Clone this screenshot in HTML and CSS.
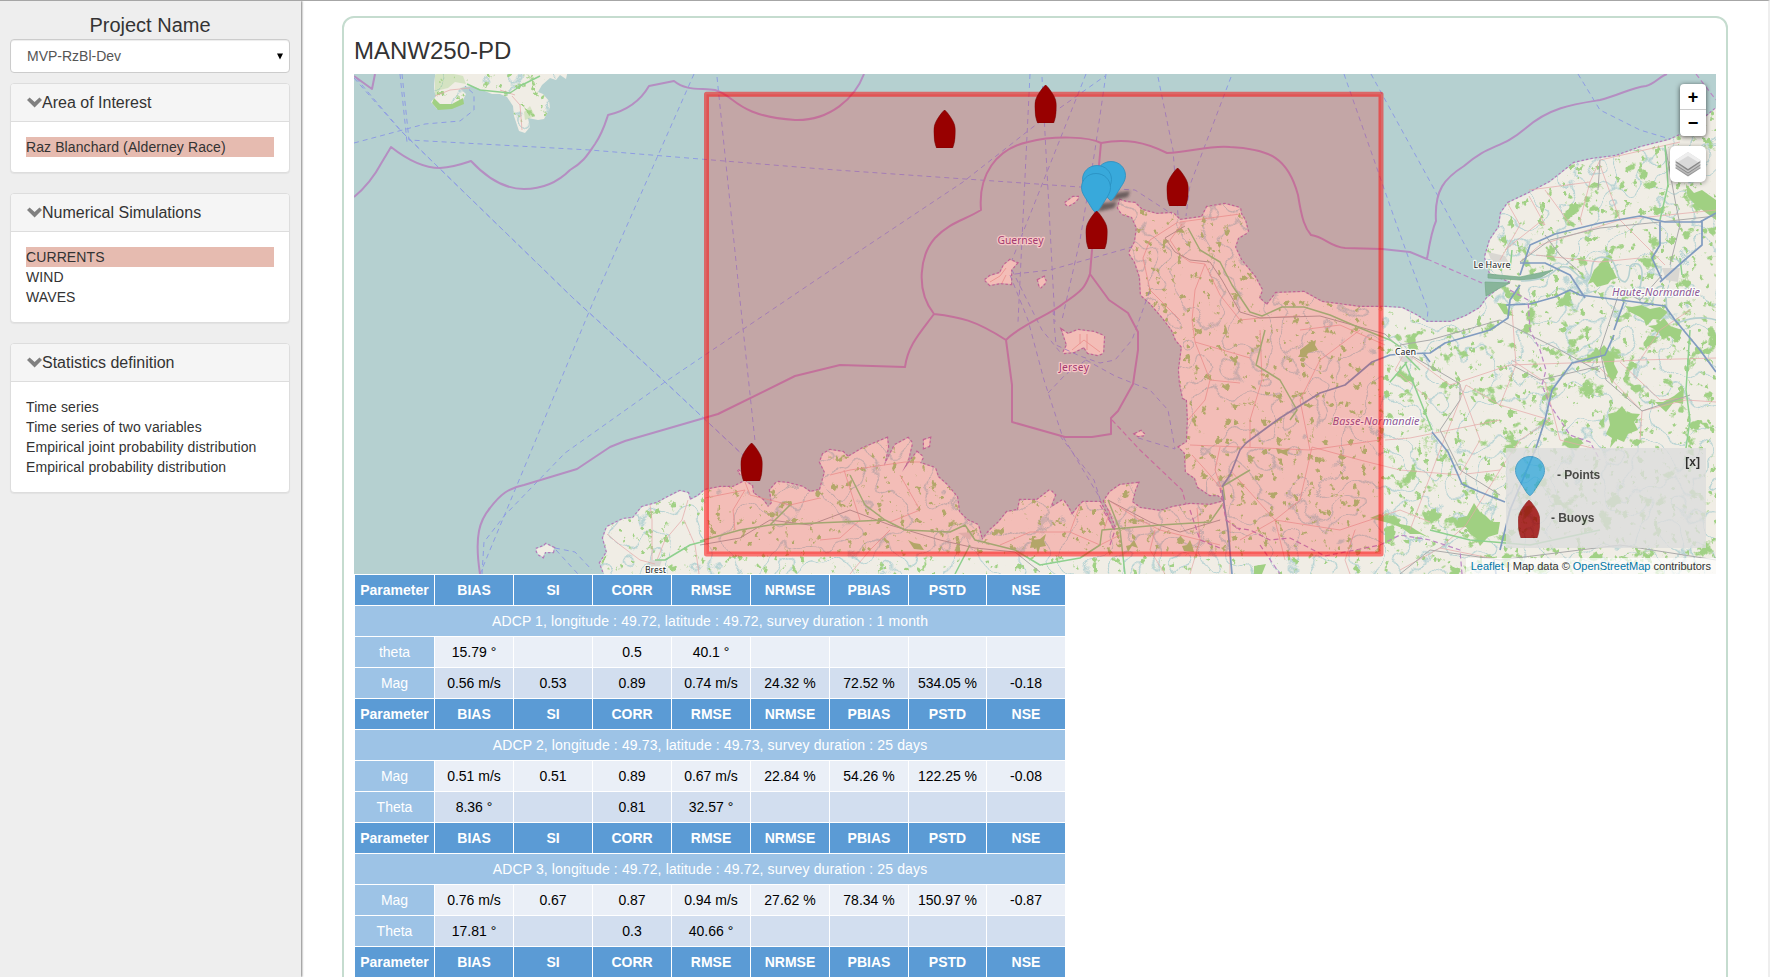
FILE: index.html
```html
<!DOCTYPE html>
<html lang="en">
<head>
<meta charset="utf-8">
<title>MANW250-PD</title>
<link rel="stylesheet" href="styles.css">
</head>
<body>
<svg class="sprites" width="0" height="0" aria-hidden="true">
  <defs>
    <symbol id="chevron" viewBox="0 0 15 11"><path d="M2.6.6 7.6 5 12.5.6 15 3.1 7.6 10.6 0 3.1z"/></symbol>
    <symbol id="buoy" viewBox="0 0 22 38"><path d="M11 0C12.500 .8 18 8 20 12.500C22 17 22 20 21.700 24C21.500 30 20.500 34 19 38H3C1.500 34 .5 30 .3 24C0 20 0 17 2 12.500C4 8 9.500 .8 11 0Z"/></symbol>
    <symbol id="point" viewBox="0 0 30 40"><path d="M15 .5C23.500 .5 29.500 7 29.500 14.500C29.500 20 26 24 23 29C20 33.500 17 39 15 39.500C12.500 39 10 33.500 7 29C4 24 .5 20 .5 14.500C.5 7 6.500 .5 15 .5Z"/></symbol>
  </defs>
</svg>
<div class="page">
  <aside class="sidebar">
    <h1 class="project-title">Project Name</h1>
    <div class="select"><span>MVP-RzBl-Dev</span><svg class="select-arrow" viewBox="0 0 6 7"><path d="M0 .5H6L3 6.500Z"/></svg></div>
    <section class="box">
      <h2 class="box-head"><svg class="chev"><use href="#chevron"/></svg>Area of Interest</h2>
      <ul class="box-body"><li class="active">Raz Blanchard (Alderney Race)</li></ul>
    </section>
    <section class="box">
      <h2 class="box-head"><svg class="chev"><use href="#chevron"/></svg>Numerical Simulations</h2>
      <ul class="box-body"><li class="active">CURRENTS</li><li>WIND</li><li>WAVES</li></ul>
    </section>
    <section class="box">
      <h2 class="box-head"><svg class="chev"><use href="#chevron"/></svg>Statistics definition</h2>
      <ul class="box-body"><li>Time series</li><li>Time series of two variables</li><li>Empirical joint probability distribution</li><li>Empirical probability distribution</li></ul>
    </section>
  </aside>
  <main class="content">
    <div class="card">
      <h2 class="card-title">MANW250-PD</h2>
      <div class="map">
        <svg class="map-canvas" viewBox="354 74 1362 500">
          <defs>
            <path id="france" d="M605 576 600 563 607 552 603 538 607 527 623 519 633 518 642 507 657 503 668 497 680 491 688 493 690 500 698 496 705 490 720 487 733 487 745 481 752 486 753 493 763 500 768 507 772 503 770 490 777 482 788 483 803 487 810 492 820 490 825 472 820 462 823 454 830 450 843 452 848 457 863 448 875 443 887 438 888 447 884 466 895 445 908 438 912 443 908 460 902 472 917 452 923 457 920 463 935 468 938 477 947 485 957 497 959 512 967 520 978 525 982 540 990 530 998 523 1007 512 1018 510 1020 500 1037 500 1050 490 1055 495 1050 508 1063 500 1068 507 1072 515 1078 507 1083 502 1100 502 1107 515 1113 530 1116 527 1110 512 1104 501 1110 492 1120 485 1138 483 1135 490 1132 502 1140 508 1160 511 1173 507 1190 504 1210 505 1225 501 1218 495 1210 495 1198 487 1195 478 1186 472 1185 453 1179 447 1187 442 1188 420 1187 400 1183 398 1180 383 1179 370 1182 347 1176 340 1172 330 1163 318 1150 303 1141 295 1140 277 1135 262 1129 253 1135 242 1137 228 1132 217 1122 214 1118 208 1120 200 1126 202 1135 203 1142 210 1157 214 1173 213 1180 220 1202 217 1207 207 1225 204 1240 208 1241 214 1245 220 1248 232 1238 238 1235 247 1241 260 1255 277 1262 290 1259 298 1267 305 1276 293 1304 292 1322 302 1360 307 1385 307 1402 308 1416 315 1427 322 1451 322 1466 316 1480 308 1487 298 1501 287 1511 282 1490 273 1488 267 1485 257 1490 240 1499 227 1501 213 1508 203 1529 193 1550 182 1574 163 1592 159 1616 156 1641 147 1669 140 1687 132 1708 115 1720 105 1720 580 605 580Z"/>
            <path id="cornwall" d="M436 70C434 82 433 90 436 96L431 102 437 109 452 108 463 100 466 94 460 88 472 86 482 90 492 94 500 94 507 97 513 106 514 116 519 131 525 133 530 127 528 118 538 120 544 119 550 108 549 101 543 94 538 92 542 85 550 78 556 80 560 75 566 79 568 70Z"/>
            <path id="islands" d="M985 280 990 276 1000 273 1004 265 1010 260 1017 263 1011 270 1011 284 1000 283 990 285ZM1038 280 1044 277 1046 282 1040 288ZM1065 203 1073 197 1079 197 1075 202 1068 206ZM1062 330 1068 334 1078 330 1094 332 1104 336 1103 353 1098 355 1088 353 1084 347 1074 352 1063 353 1067 345ZM536 549 544 546 546 544 554 548 553 552 545 552 543 557 538 554ZM924 440 930 438 929 446 924 448ZM1135 434 1141 431 1145 435 1138 436ZM738 470 743 474 741 475Z"/>
            <clipPath id="landclip"><use href="#france"/><use href="#cornwall"/></clipPath>
            <clipPath id="eastclip"><path d="M1385 320 1450 330 1540 220 1640 150 1716 120V574H1385Z"/></clipPath>
            <filter id="woods" x="0" y="0" width="1" height="1" color-interpolation-filters="sRGB">
              <feTurbulence type="fractalNoise" baseFrequency=".05 .055" numOctaves="5" seed="7"/>
              <feColorMatrix values="0 0 0 0 .63  0 0 0 0 .82  0 0 0 0 .52  14 0 0 0 -8.900"/>
            </filter>
            <filter id="groves" x="0" y="0" width="1" height="1" color-interpolation-filters="sRGB">
              <feTurbulence type="fractalNoise" baseFrequency=".13 .11" numOctaves="4" seed="23"/>
              <feColorMatrix values="0 0 0 0 .63  0 0 0 0 .82  0 0 0 0 .52  12 0 0 0 -7.900"/>
            </filter>
            <filter id="streams" x="0" y="0" width="1" height="1" color-interpolation-filters="sRGB">
              <feTurbulence type="fractalNoise" baseFrequency=".018" numOctaves="3" seed="4"/>
              <feColorMatrix values="0 0 0 0 .66  0 0 0 0 .80  0 0 0 0 .81  1 0 0 0 0"/>
              <feComponentTransfer><feFuncA type="table" tableValues="0 0 0 0 0 0 0 0 0 0 0 0 0 0 0 0 0 0 0 0 0 0 0 0 0 0 0 0 .8 0 0 0 0 0 0 0 0 0 0 0 .8 0 0 0 0 0 0 0 0 0 0 0 0 0 0 0 0 0 0 0 0 0 0 0 0 0 0 0 0 0"/></feComponentTransfer>
            </filter>
            <filter id="soft" x="-30%" y="-50%" width="160%" height="200%"><feGaussianBlur stdDeviation="1.5"/></filter>
          </defs>
          <rect x="354" y="74" width="1362" height="500" fill="#b5d0d0"/>
          <g class="coast"><use href="#france"/><use href="#islands"/></g>
          <g fill="#f0ede5"><use href="#france"/><use href="#cornwall"/><use href="#islands"/></g>
          <g clip-path="url(#landclip)">
            <rect x="354" y="74" width="1362" height="500" filter="url(#streams)"/>
            <rect x="354" y="74" width="1362" height="500" filter="url(#groves)"/>
            <g clip-path="url(#eastclip)"><rect x="1300" y="74" width="416" height="500" filter="url(#woods)"/></g>
          </g>
          <g class="forest">
            <path d="M1686 184 1694 193 1702 190 1716 200V220L1705 212 1697 206 1688 197ZM1594 270 1602 262 1606 266 1612 268 1617 278 1611 280 1608 284 1597 287 1593 282 1588 284ZM1625 306 1632 307 1642 305 1650 309 1660 307 1668 312 1660 320 1653 319 1646 326 1644 320 1640 317 1630 312ZM1648 326 1656 325 1664 318 1670 326 1682 330 1678 342 1670 336 1662 338 1658 331ZM1604 345 1610 352 1615 356 1614 364 1618 372 1612 384 1606 370 1603 360 1597 352ZM1608 414 1616 412 1622 406 1627 413 1640 414 1634 422 1638 430 1628 434 1624 442 1617 439 1610 448 1612 438 1606 434 1610 425ZM1655 402 1663 402 1674 396 1684 388 1683 404 1674 402 1666 412ZM1458 518 1467 516 1474 503 1480 512 1486 516 1492 522 1500 522 1498 534 1488 537 1480 546 1476 538 1470 534 1466 527 1456 528ZM1380 514 1388 518 1394 515 1400 524 1410 526 1416 530 1430 538 1420 534 1410 534 1402 528 1392 524 1370 518ZM1300 350 1308 344 1316 340 1315 345 1318 350 1308 353 1306 357 1298 357 1300 354ZM1276 448 1283 450 1290 448 1287 452 1288 456 1281 453 1278 454ZM1032 540 1040 539 1046 534 1044 541 1046 546 1040 547 1038 554 1036 547 1030 548ZM1182 546 1187 545 1190 540 1192 545 1194 552 1184 551ZM1126 546 1130 545 1134 540 1138 548 1132 546 1128 552ZM908 540 914 543 920 544 924 550 914 549ZM1254 566 1266 564 1262 574 1254 574ZM1497 303 1506 304 1508 310 1514 316 1504 314ZM434 98 440 104 452 104 463 98 464 104 452 109 438 110 432 103Z"/>
            <path d="M435 76C436 70 455 74 463 76L466 84 455 82 448 88 440 90 435 96ZM524 112 530 106 535 116 525 120Z" fill-opacity=".35"/>
          </g>
          <g class="port"><path d="M1488 274 1520 277 1553 270 1538 279 1520 280 1488 278ZM1485 282 1510 283 1498 289 1486 296Z"/></g>
          <g class="town"><path d="M1488 252 1505 256 1512 268 1494 268ZM1662 268 1680 268 1678 282 1666 280ZM1398 356 1414 354 1412 362 1402 362ZM650 560 662 560 660 566 650 566ZM958 533 974 532 970 540ZM1178 222 1186 222 1182 228Z"/></g>
          <path class="river" d="M1521 281C1545 280 1550 275 1558 268C1572 262 1576 278 1586 281C1596 278 1586 258 1602 257C1622 258 1612 280 1625 282C1634 276 1624 262 1638 264C1650 272 1630 300 1645 306C1660 304 1648 288 1662 286C1672 296 1658 318 1680 322C1700 314 1716 320 1716 320"/>
          <g class="minor">
            <path d="M1182 224 1170 240 1180 255 1190 262 1205 264 1220 295 1240 320 1260 318 1300 316M1178 222 1150 240 1143 258 1150 290 1165 305 1180 320M1205 264 1195 290 1192 320 1195 342 1210 380 1205 400 1188 420M1210 380 1240 383M1180 222 1210 218 1240 214M1195 342 1250 358M1190 445 1240 447 1310 450 1380 440M1220 447 1215 470 1222 490M1192 455 1210 475 1222 490M1300 330 1340 325 1385 345M1260 330 1262 380 1250 420 1250 447M1310 450 1300 400 1320 360 1360 330M1312 447 1360 460 1400 470 1460 475 1480 440 1460 385M1312 447 1300 500 1275 520 1285 560M1275 520 1340 530 1400 510 1430 522M1385 440 1410 438 1500 420M1355 530 1345 560 1350 574M1240 540 1275 520 1230 470M1405 352 1450 385 1510 365 1600 362M1405 352 1395 370 1430 400M1466 385 1500 405 1550 420M1466 385 1440 450 1410 530M1500 405 1516 365 1512 310M1600 362 1640 360 1716 358M1640 360 1660 330 1690 310M1620 362 1660 400 1686 398M1642 411 1600 368M1642 411 1686 400 1716 402M1642 411 1640 440M1512 360 1545 382 1560 440 1600 450M1466 474 1500 470 1520 440 1550 420M1400 570 1440 548 1466 525 1500 470M1440 548 1500 560M1508 204 1520 225 1500 260M1529 196 1545 225 1540 222 1505 250M1529 190 1590 182 1600 160M1590 182 1580 220 1582 225M1600 160 1680 142M1620 220 1600 165M1620 220 1640 240 1665 265M1620 220 1540 245 1520 262M1620 220 1716 210M1536 255 1600 262 1640 258M1545 190 1570 224"/>
            <path d="M607 534 620 545 640 560 655 564M652 560 652 520 650 505M657 560 665 540 682 520 688 500M684 520 695 545 699 574M705 498 745 490 733 510 735 530M745 482 750 495 790 505 820 498M820 540 840 538 860 520 844 470M830 475 850 470 905 462 920 462M890 530 870 550 850 574M890 522 920 510 900 475M1000 545 1030 532 1070 532 1080 505M1070 532 1100 545 1120 535M1108 500 1140 520 1160 530 1220 545M1155 530 1150 550 1165 574M1110 510 1104 530M1190 574 1200 540 1197 508M1230 520 1230 574"/>
            <path d="M435 96 450 90 470 88M512 96 520 105 522 130M500 90 515 95M990 282 1000 276 1006 268M1002 283 1006 275M1072 350 1084 340 1100 352M1087 334V350M1080 334V344"/>
          </g>
          <g class="rail">
            <path d="M1185 226 1165 238 1175 252 1190 260 1210 262 1222 280 1240 312 1260 318 1320 316 1385 334 1402 350 1450 378 1460 384 1460 400 1440 430 1460 470 1500 495M700 545 740 538 770 520 810 525 850 510 890 525 940 540 975 548 1015 552 1040 572M1108 500 1150 522 1180 532 1220 520M1402 350 1400 345 1430 340 1500 320 1560 350 1600 372M1662 275 1640 300 1620 290 1600 350 1606 380 1642 411 1690 395M1545 235 1560 255 1580 272M1520 262 1550 240 1600 228 1660 222 1716 216M1665 145 1675 200 1680 225 1670 265M1600 160 1598 190M1512 365 1540 380 1600 366M1400 574 1430 550 1500 560 1620 545 1716 560"/>
          </g>
          <g class="trunk">
            <path d="M1188 228 1200 250 1220 262 1232 285 1250 312 1262 316 1282 307 1304 307 1330 315 1360 328 1390 340 1402 348M1265 330 1256 365 1280 380 1297 410 1290 420M1405 362 1432 430M1407 362 1390 382M1402 352 1420 370M700 541 740 530 770 525 790 505M770 525 840 522 885 520 905 530 950 532 965 525 975 540 1015 550 1040 565 1080 558 1100 545 1102 530 1160 525 1210 522 1222 505M850 475 865 505 885 520M970 545 955 574M1108 500 1120 530 1125 574M1225 500 1223 486 1250 470M1665 145 1668 185 1660 220M1690 330 1686 390 1690 420 1686 448M1510 270 1512 250M1682 275 1680 258M655 560 665 560 690 545 705 541M1430 530 1470 540 1530 545 1600 530M467 84 480 90 510 93 522 85 540 76"/>
          </g>
          <g class="motorway">
            <path d="M1222 487 1230 475 1240 450 1246 443 1280 418 1320 393 1345 385 1372 362 1390 355 1402 354 1430 353 1445 343 1490 330 1508 318 1510 300 1520 285M1424 354 1430 362M1222 490 1228 530 1232 574M1432 432 1448 452 1462 484 1480 492 1505 502M1536 448 1545 420 1552 390 1572 363 1605 355 1614 335M1614 330 1624 302M1506 305 1530 304 1555 297 1570 290 1580 295 1620 300 1665 306 1675 320 1700 350 1716 372M1520 275 1530 245 1555 234 1600 223 1640 216 1665 222 1700 222 1716 213M1702 220 1702 245 1680 264 1660 282M1520 263 1545 263 1570 275 1585 298M1660 222 1660 245 1652 258 1662 280M1500 550 1510 510 1536 448M1496 574 1494 560"/>
          </g>
          <path class="region" d="M1510 290 1528 300 1530 330 1540 350 1546 370 1542 385 1550 405 1570 435 1590 442 1600 460M1236 528 1250 530 1270 540 1290 538 1325 556 1380 545 1400 535 1430 540 1460 550 1462 574M1220 488 1226 520 1240 530M1260 545 1280 574M1190 510 1200 540 1220 548M1100 505 1115 530 1110 545"/>
          <g class="ferry">
            <path d="M354 78 400 130 572 297 663 380 744 456M356 78 402 132 574 299 665 382 746 458"/>
            <path d="M400 74 407 142M402 74 409 140 590 150 822 169 1080 187 1135 190 1172 214M354 143 425 124 460 121 474 110 474 94 465 86M694 74 594 300 480 574M717 77 740 300 755 441"/>
            <path d="M482 574 484 542 505 515 565 453 665 382 822 276 963 182 1033 127 1105 76M1030 74 1018 322M1042 77 1055 322M1086 74 1012 260M1106 74 1095 150 1080 240 1062 320M1158 77 1173 150 1178 215M1231 77 1190 185 1186 216M1012 270 1042 330 1060 352M1010 275 1028 320 1044 380 1062 435 1100 498M1015 274 1050 270 1132 247M1344 74 1395 220 1410 262 1428 310 1427 322M1371 74 1472 258M1578 74 1600 110 1640 130 1670 139M1048 393 1065 375 1086 360M1086 360 1115 376 1150 390 1168 410 1175 449 1135 437M1060 436 1094 480 1101 502M1053 310 1056 345 1080 356 1100 363 1115 360 1132 340 1150 290M555 548 575 552 592 570M556 550 578 574"/>
          </g>
          <path class="region" d="M1427 259 1482 283M1112 420 1140 450 1182 490 1186 504M1696 74 1716 100"/>
          <path class="limit" d="M354 76 372 89 375 74M354 197C365 188 375 175 382 162L391 147C410 162 425 168 440 168C455 167 465 163 471 161C484 175 502 189 524 189C546 189 560 180 570 170C584 162 588 154 595 144C603 132 605 124 608 115C630 110 642 98 649 86L674 81C686 91 700 88 715 90C735 95 735 116 795 120C830 121 855 98 864 74M480 574C474 535 480 520 490 508C500 495 508 488 524 485L577 469 610 447 625 441 718 414 795 376 840 365 905 367C908 345 920 333 934 314C915 290 920 255 935 238C950 222 965 220 981 210C978 175 996 149 1028 142C1055 135 1090 137 1101 143C1125 138 1145 142 1167 153C1190 152 1210 145 1230 147C1270 149 1288 158 1298 195C1302 220 1305 228 1311 235C1325 237 1330 247 1345 248L1382 249 1410 252 1427 259C1430 240 1432 230 1436 221C1434 190 1445 178 1464 166C1490 143 1500 150 1526 128C1550 107 1575 104 1600 100C1620 95 1630 88 1646 86C1655 84 1660 76 1667 74M934 314C960 317 975 320 1006 340C1020 325 1050 315 1064 303C1085 289 1085 286 1090 274L1109 300 1128 313 1138 332V350L1133 384 1118 411 1111 418V434L1092 437H1065L1012 422V385L1006 340M1101 143 1099 165 1092 250 1090 274"/>
          <g class="labels">
            <text class="country" x="997.500" y="244" textLength="46">Guernsey</text>
            <text class="country" x="1059" y="371" textLength="30">Jersey</text>
            <text class="city" x="1473.500" y="268" textLength="37">Le Havre</text>
            <text class="city" x="1395" y="355" textLength="21">Caen</text>
            <text class="city" x="645" y="572.500" textLength="21">Brest</text>
            <text class="province" x="1612" y="296" textLength="88">Haute-Normandie</text>
            <text class="province" x="1332.500" y="425" textLength="87">Basse-Normandie</text>
          </g>
          <rect class="extent" x="706.500" y="94.300" width="674.500" height="459.700"/>
          <g class="shadows" filter="url(#soft)"><path d="M1111 201 1116 193 1130 191 1128 197ZM1097 212 1102 203 1117 202 1114 208Z"/></g>
          <g class="points"><use href="#point" x="1096" y="161" width="30" height="40"/><use href="#point" x="1082" y="165" width="30" height="40"/><use href="#point" x="1081" y="173" width="30" height="40"/></g>
          <g class="buoys"><use href="#buoy" x="933.600" y="110" width="22" height="38"/><use href="#buoy" x="1034.600" y="85" width="22" height="38"/><use href="#buoy" x="1166.600" y="168" width="22" height="38"/><use href="#buoy" x="1085.600" y="211" width="22" height="38"/><use href="#buoy" x="740.600" y="443" width="22" height="38"/></g>
        </svg>
        <div class="map-tools">
          <div class="zoom"><span>+</span><span>−</span></div>
          <div class="layers"><svg viewBox="0 0 26 26"><path d="M0 17 13 9 26 17 13 25.500Z" fill="#999"/><path d="M0 16 13 8 26 16 13 24Z" fill="#bbb"/><path d="M0 14 13 6 26 14 13 22.500Z" fill="#888"/><path d="M0 13 13 5 26 13 13 21.500Z" fill="#c4c4c4"/><path d="M0 11 13 2.500 26 11 13 19.800Z" fill="#888"/><path d="M0 9.500 13 1 26 9.500 13 18Z" fill="#d9d9d9"/><path d="M0 9.500 13 1 26 9.500 23 11 13 5 3 11Z" fill="#eee"/></svg></div>
        </div>
        <div class="legend">
          <span class="legend-close">[x]</span>
          <div class="legend-row"><svg class="legend-point"><use href="#point"/></svg><span>- Points</span></div>
          <div class="legend-row second"><svg class="legend-buoy"><use href="#buoy"/></svg><span>- Buoys</span></div>
        </div>
        <div class="attribution"><a>Leaflet</a> | Map data © <a>OpenStreetMap</a> contributors</div>
      </div>
      <table class="stats">
        <colgroup><col class="c-first"><col><col><col><col><col><col><col class="c-pstd"><col></colgroup>
        <tbody>
          <tr><th>Parameter</th><th>BIAS</th><th>SI</th><th>CORR</th><th>RMSE</th><th>NRMSE</th><th>PBIAS</th><th>PSTD</th><th>NSE</th></tr>
          <tr><td class="group" colspan="9">ADCP 1, longitude : 49.72, latitude : 49.72, survey duration : 1 month</td></tr>
          <tr class="odd"><td class="name">theta</td><td>15.79 °</td><td></td><td>0.5</td><td>40.1 °</td><td></td><td></td><td></td><td></td></tr>
          <tr class="even"><td class="name">Mag</td><td>0.56 m/s</td><td>0.53</td><td>0.89</td><td>0.74 m/s</td><td>24.32 %</td><td>72.52 %</td><td>534.05 %</td><td>-0.18</td></tr>
          <tr><th>Parameter</th><th>BIAS</th><th>SI</th><th>CORR</th><th>RMSE</th><th>NRMSE</th><th>PBIAS</th><th>PSTD</th><th>NSE</th></tr>
          <tr><td class="group" colspan="9">ADCP 2, longitude : 49.73, latitude : 49.73, survey duration : 25 days</td></tr>
          <tr class="odd"><td class="name">Mag</td><td>0.51 m/s</td><td>0.51</td><td>0.89</td><td>0.67 m/s</td><td>22.84 %</td><td>54.26 %</td><td>122.25 %</td><td>-0.08</td></tr>
          <tr class="even"><td class="name">Theta</td><td>8.36 °</td><td></td><td>0.81</td><td>32.57 °</td><td></td><td></td><td></td><td></td></tr>
          <tr><th>Parameter</th><th>BIAS</th><th>SI</th><th>CORR</th><th>RMSE</th><th>NRMSE</th><th>PBIAS</th><th>PSTD</th><th>NSE</th></tr>
          <tr><td class="group" colspan="9">ADCP 3, longitude : 49.72, latitude : 49.72, survey duration : 25 days</td></tr>
          <tr class="odd"><td class="name">Mag</td><td>0.76 m/s</td><td>0.67</td><td>0.87</td><td>0.94 m/s</td><td>27.62 %</td><td>78.34 %</td><td>150.97 %</td><td>-0.87</td></tr>
          <tr class="even"><td class="name">Theta</td><td>17.81 °</td><td></td><td>0.3</td><td>40.66 °</td><td></td><td></td><td></td><td></td></tr>
          <tr><th>Parameter</th><th>BIAS</th><th>SI</th><th>CORR</th><th>RMSE</th><th>NRMSE</th><th>PBIAS</th><th>PSTD</th><th>NSE</th></tr>
        </tbody>
      </table>
    </div>
  </main>
</div>
</body>
</html>
```
FILE: styles.css
```css
* { box-sizing: border-box; }
body { margin: 0; font: 14px/20px "Liberation Sans", Arial, sans-serif; color: #333; background: #fff; overflow: hidden; }
.sprites { display: block; position: absolute; }
.page { display: flex; height: 977px; border-top: 1px solid #a6a6a6; border-right: 2px solid #eee; overflow: hidden; }
.sidebar { flex: none; width: 301px; height: 976px; padding: 11px 11px 0 10px; background: #eee; box-shadow: 1px 0 2px rgba(0,0,0,.5); }
.project-title { margin: 0 0 3px; height: 24px; font-size: 20px; line-height: 26px; font-weight: 400; text-align: center; }
.select { display: flex; align-items: center; justify-content: space-between; height: 34px; margin-bottom: 10px; padding: 0 6px 0 16px; border: 1px solid #ccc; border-radius: 4px; background: #fff; color: #555; box-shadow: inset 0 1px 1px rgba(0,0,0,.075); }
.select-arrow { width: 6px; height: 7px; fill: #000; }
.box { margin-bottom: 20px; border: 1px solid #ddd; border-radius: 4px; background: #fff; box-shadow: 0 1px 1px rgba(0,0,0,.05); overflow: hidden; }
.box-head { display: flex; align-items: center; height: 38px; margin: 0; padding: 0 16px; border-bottom: 1px solid #ddd; background: #f5f5f5; font-size: 16px; font-weight: 400; }
.chev { width: 15px; height: 11px; fill: #808080; }
.box-body { margin: 0; padding: 15px; list-style: none; letter-spacing: .1px; }
.active { background: #e6bbb0; }
.content { flex: 1; min-width: 0; padding: 15px 40px 0 41px; }
.card { height: 1100px; padding: 14px 10px 0; border: 2px solid #c5dccf; border-radius: 12px; }
.card-title { margin: 0; height: 42px; font-size: 24px; line-height: 38px; font-weight: 400; }
.map { position: relative; width: 1362px; height: 500px; overflow: hidden; }
.map-canvas { display: block; width: 1362px; height: 500px; }
.coast { fill: none; stroke: #b27cba; stroke-width: 2.5; stroke-dasharray: 2.5 2; }
.forest { fill: #a0d082; }
.port { fill: #88b59a; stroke: #74aa87; stroke-width: .7; }
.town { fill: #d9d7d2; }
.river { fill: none; stroke: #b5d0d0; stroke-width: 1.6; }
.minor, .rail, .trunk, .motorway, .ferry, .limit, .region { fill: none; stroke-linejoin: round; }
.minor { stroke: #e4a9a8; stroke-width: .9; opacity: .8; }
.rail { stroke: #aaa; stroke-width: 1; }
.trunk { stroke: #8ed08e; stroke-width: 1.5; }
.motorway { stroke: #809bc0; stroke-width: 1.7; }
.region { stroke: #bc87c5; stroke-width: 1.2; stroke-dasharray: 5 3; }
.ferry { stroke: #8793e6; stroke-width: 1; stroke-dasharray: 5 4; opacity: .85; }
.limit { stroke: #b58ec2; stroke-width: 2; }
.labels { font-family: "Noto Sans", "Open Sans", sans-serif; paint-order: stroke; stroke: rgba(255,255,255,.85); stroke-width: 2.5px; stroke-linejoin: round; }
.country { font-size: 10.5px; fill: #8c4c8c; }
.city { font-size: 9px; fill: #222; }
.province { font-size: 11px; font-style: italic; fill: #8d5a98; }
.extent { fill: #f00; fill-opacity: .2; stroke: #f00; stroke-opacity: .5; stroke-width: 5; stroke-linejoin: round; }
.shadows { fill: #222; opacity: .55; }
.points { fill: #38a9db; stroke: #2a8fc0; stroke-width: .8; }
.buoys { fill: #980000; stroke: #700; stroke-width: .6; }
.map-tools { position: absolute; top: 10px; right: 10px; display: flex; flex-direction: column; align-items: flex-end; gap: 10px; }
.zoom { width: 26px; height: 52px; border-radius: 4px; background: #fff; box-shadow: 0 1px 5px rgba(0,0,0,.65); color: #000; font-weight: 700; font-size: 18px; line-height: 26px; text-align: center; }
.zoom span { display: block; height: 26px; }
.zoom span:first-child { border-bottom: 1px solid #ccc; }
.layers { display: grid; place-items: center; width: 36px; height: 36px; border-radius: 5px; background: #fff; box-shadow: 0 1px 5px rgba(0,0,0,.4); }
.layers svg { width: 26px; height: 26px; }
.legend { position: absolute; right: 10px; bottom: 26px; width: 200px; height: 100px; padding: 8px 9px; background: #ddd; opacity: .8; font-size: 12px; font-weight: 700; color: #222; }
.legend-close { position: absolute; top: 4px; right: 6px; color: #000; }
.legend-row { display: flex; align-items: center; height: 40px; }
.legend-row span { position: relative; top: -1px; letter-spacing: -.1px; }
.legend-row.second { margin-top: 3px; }
.legend-point { width: 30px; height: 40px; margin-right: 12px; fill: #38a9db; stroke: #2a8fc0; }
.legend-buoy { width: 22px; height: 38px; margin: 0 11px 0 3px; fill: #980000; stroke: #700; stroke-width: .6; }
.attribution { position: absolute; right: 0; bottom: 0; height: 16px; padding: 0 5px; background: rgba(255,255,255,.7); font-size: 11px; line-height: 17px; white-space: nowrap; }
.attribution a { color: #0078a8; }
.stats { width: 712px; table-layout: fixed; border-collapse: separate; border-spacing: 1px; color: #000; }
.stats col { width: 78px; }
.stats .c-first { width: 79px; }
.stats .c-pstd { width: 77px; }
.stats td, .stats th { height: 30px; padding: 0; text-align: center; white-space: nowrap; }
.stats th { background: #5b9bd5; color: #fff; }
.stats .group, .stats .name { background: #9dc3e6; color: #fff; }
.stats .group { letter-spacing: .13px; }
.odd td { background: #eaeff7; }
.even td { background: #d2deef; }
```
